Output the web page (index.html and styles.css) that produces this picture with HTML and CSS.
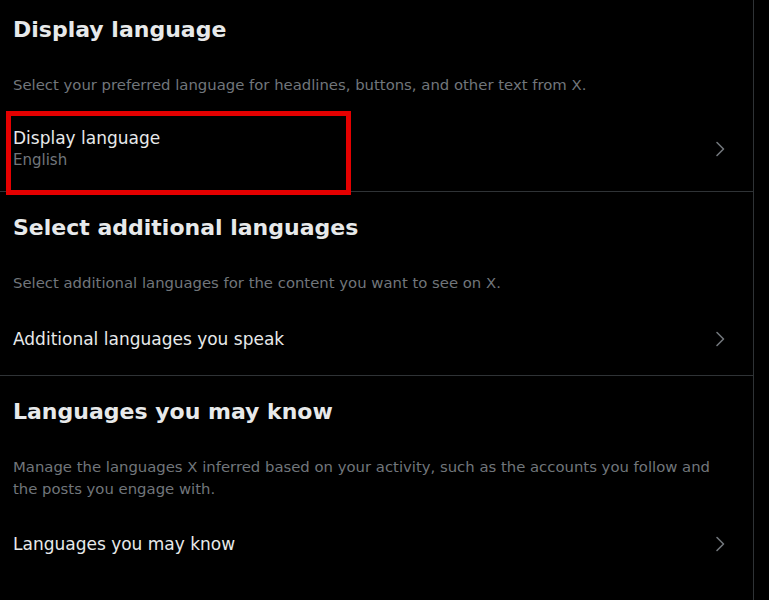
FILE: index.html
```html
<!DOCTYPE html>
<html lang="en">
<head>
<meta charset="utf-8">
<title>Languages</title>
<link rel="stylesheet" href="styles.css">
</head>
<body>
<div class="panel">
  <section class="section section-first">
    <h2 class="heading">Display language</h2>
    <p class="desc">Select your preferred language for headlines, buttons, and other text from X.</p>
    <div class="row row-double">
      <div class="row-text">
        <div class="row-title">Display language</div>
        <div class="row-sub">English</div>
      </div>
      <svg class="chev" viewBox="0 0 12 18" width="12" height="18"><path d="M3 2.5 L9.5 9 L3 15.5" fill="none" stroke="currentColor" stroke-width="1.6" stroke-linecap="round" stroke-linejoin="round"/></svg>
      <div class="highlight"></div>
    </div>
  </section>
  <section class="section">
    <h2 class="heading">Select additional languages</h2>
    <p class="desc">Select additional languages for the content you want to see on X.</p>
    <div class="row">
      <div class="row-text">
        <div class="row-title">Additional languages you speak</div>
      </div>
      <svg class="chev" viewBox="0 0 12 18" width="12" height="18"><path d="M3 2.5 L9.5 9 L3 15.5" fill="none" stroke="currentColor" stroke-width="1.6" stroke-linecap="round" stroke-linejoin="round"/></svg>
    </div>
  </section>
  <section class="section section-last">
    <h2 class="heading">Languages you may know</h2>
    <p class="desc desc-wrap">Manage the languages X inferred based on your activity, such as the accounts you follow and the posts you engage with.</p>
    <div class="row">
      <div class="row-text">
        <div class="row-title">Languages you may know</div>
      </div>
      <svg class="chev" viewBox="0 0 12 18" width="12" height="18"><path d="M3 2.5 L9.5 9 L3 15.5" fill="none" stroke="currentColor" stroke-width="1.6" stroke-linecap="round" stroke-linejoin="round"/></svg>
    </div>
  </section>
</div>
</body>
</html>
```
FILE: styles.css
```css
html, body {
  margin: 0;
  padding: 0;
  background: #000;
  height: 100%;
}
body {
  font-family: "DejaVu Sans", "Liberation Sans", sans-serif;
  color: #e7e9ea;
  overflow: hidden;
}
.panel {
  width: 753px;
  min-height: 600px;
  border-right: 1px solid #2f3336;
  display: flex;
  flex-direction: column;
}
.section {
  display: flex;
  flex-direction: column;
  padding-top: 22px;
  border-bottom: 1px solid #2f3336;
}
.section-first {
  padding-top: 16px;
}
.section-last {
  border-bottom: none;
}
.heading {
  margin: 0;
  padding: 0 13px;
  font-size: 22px;
  line-height: 28px;
  font-weight: 700;
  color: #e7e9ea;
}
.desc {
  margin: 30px 0 0;
  padding: 0 13px 12px;
  font-size: 14.85px;
  line-height: 22px;
  color: #71767b;
}
.desc-wrap {
  max-width: 715px;
}
.row {
  position: relative;
  display: flex;
  align-items: center;
  justify-content: space-between;
  padding: 21px 27px 24px 13px;
}
.row-double {
  padding: 18px 27px 20px 13px;
}
.section-last .row {
  padding-top: 20px;
}
.row-title {
  font-size: 17px;
  line-height: 24px;
  color: #e7e9ea;
}
.row-sub {
  font-size: 15px;
  line-height: 21px;
  color: #71767b;
}
.chev {
  color: #71767b;
  flex: none;
}
.highlight {
  position: absolute;
  left: 6px;
  top: 3px;
  width: 335px;
  height: 74px;
  border: 5px solid #e40000;
}
```
